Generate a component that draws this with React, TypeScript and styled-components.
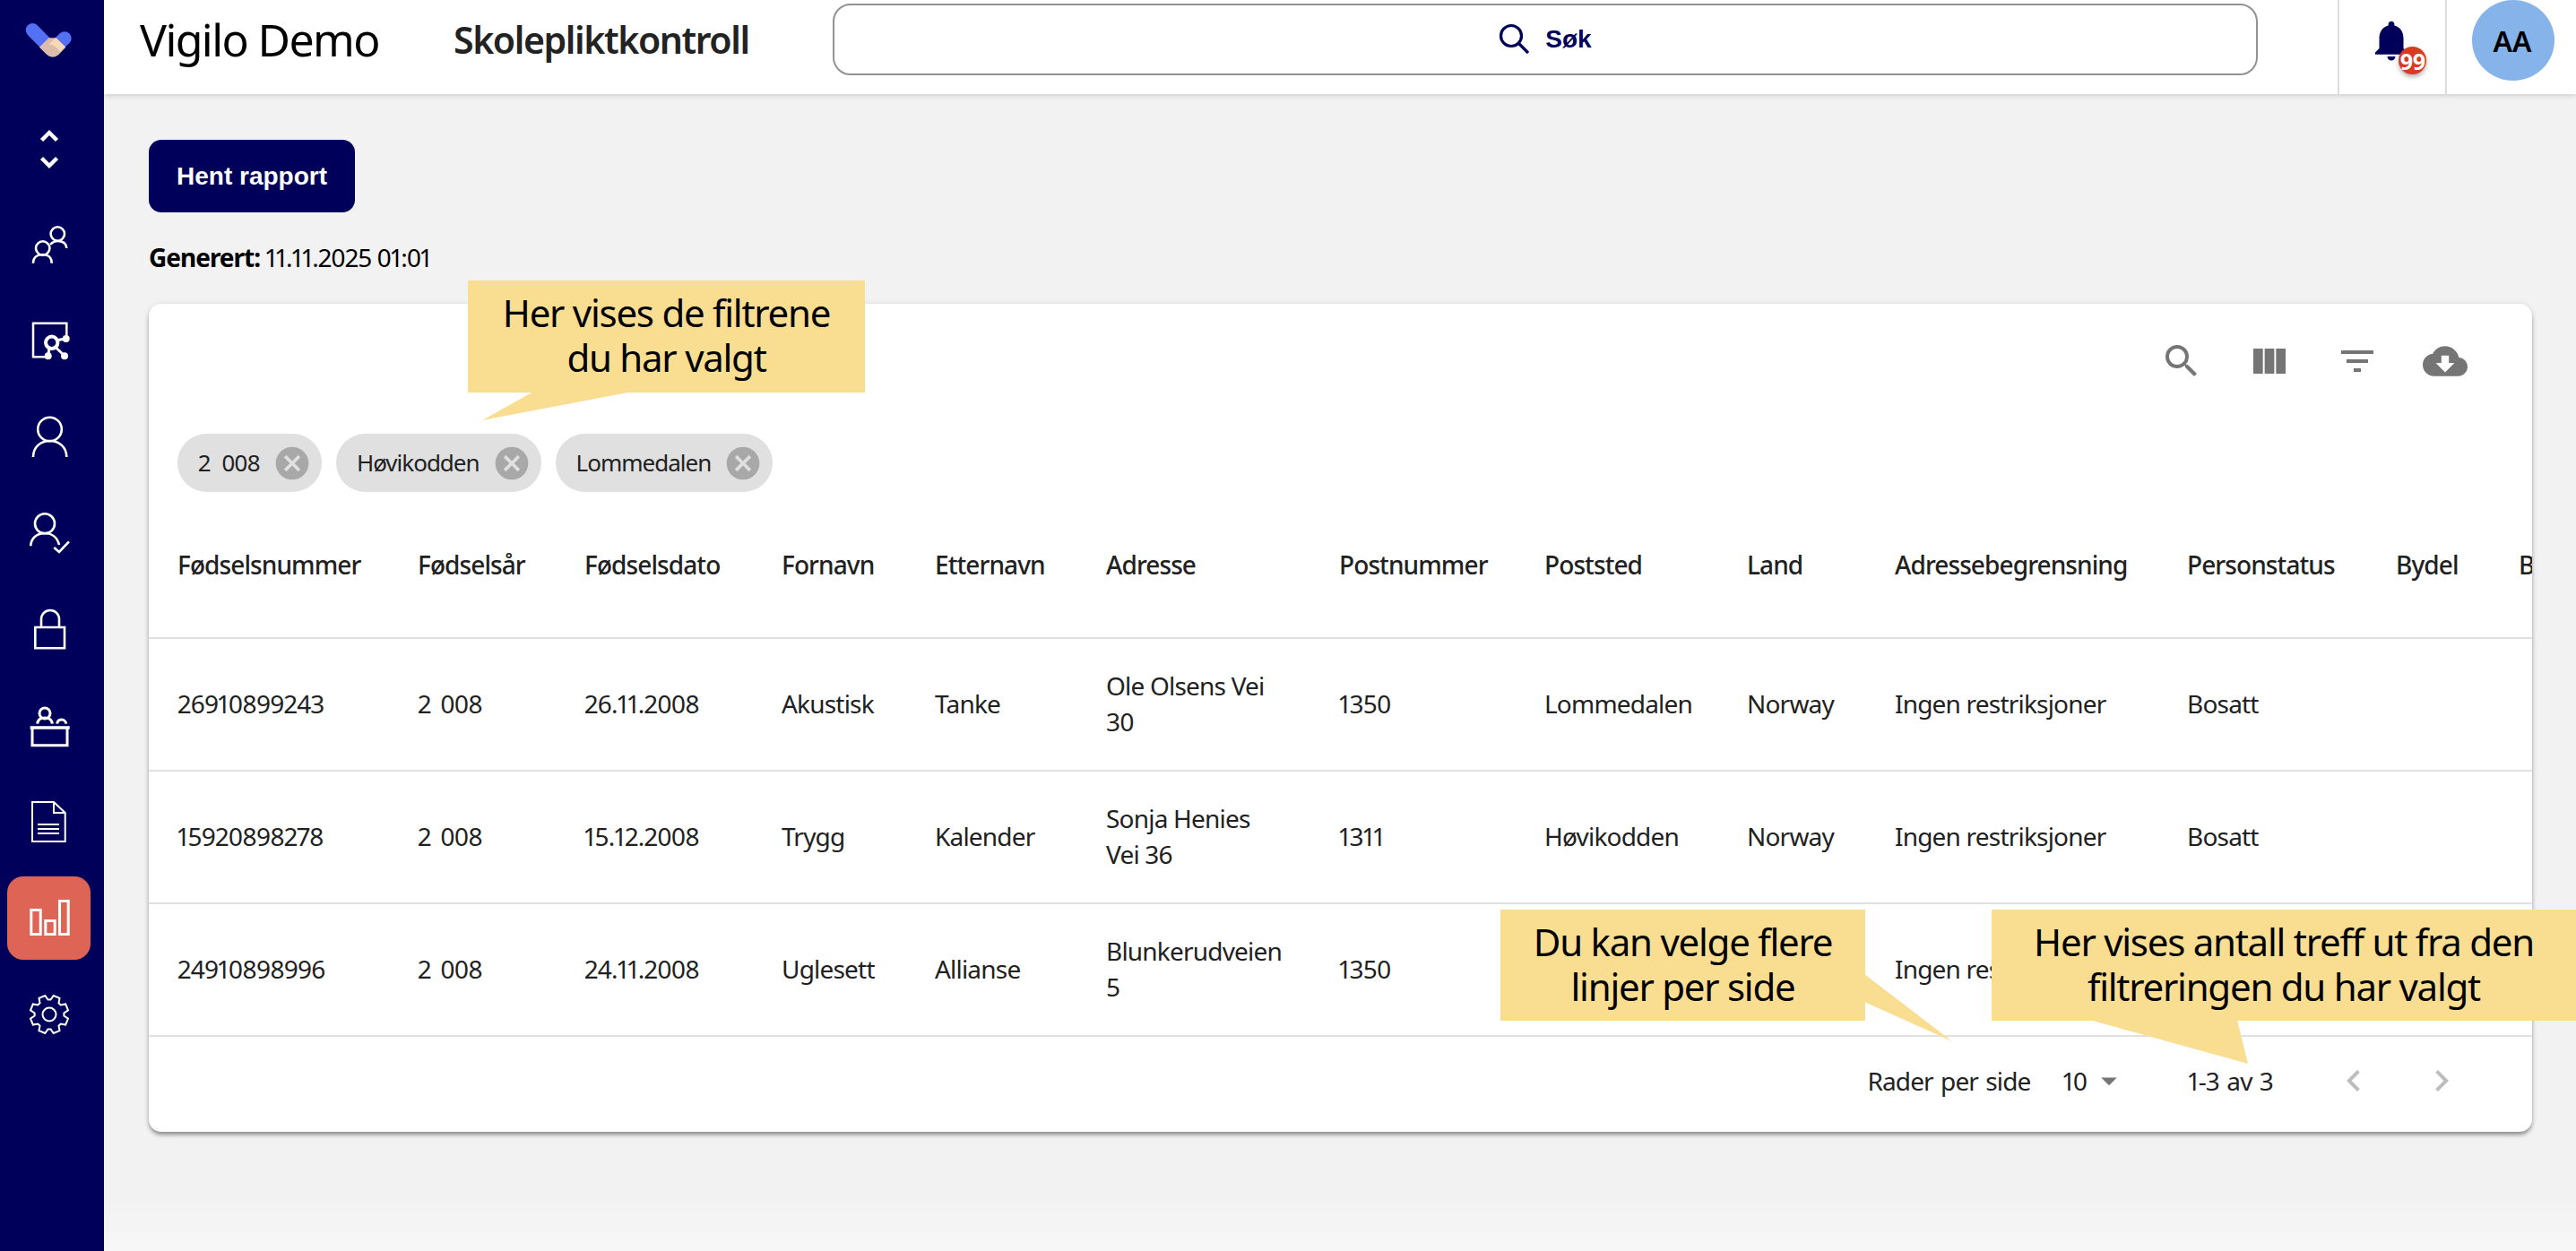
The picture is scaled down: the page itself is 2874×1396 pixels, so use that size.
import styled, { createGlobalStyle } from 'styled-components';
import {
  MdArrowDropDown,
  MdCancel,
  MdChevronLeft,
  MdChevronRight,
  MdCloudDownload,
  MdFilterList,
  MdNotifications,
  MdSearch,
  MdViewColumn,
} from 'react-icons/md';

const NAVY = '#00005a';
const COLUMNS = '268px 186px 220px 171px 191px 260px 229px 226px 165px 326px 233px 137px 400px';

const headers = [
  'Fødselsnummer', 'Fødselsår', 'Fødselsdato', 'Fornavn', 'Etternavn', 'Adresse', 'Postnummer',
  'Poststed', 'Land', 'Adressebegrensning', 'Personstatus', 'Bydel', 'Barnehage',
];

const rows = [
  ['26910899243', '2 008', '26.11.2008', 'Akustisk', 'Tanke', 'Ole Olsens Vei 30', '1350', 'Lommedalen', 'Norway', 'Ingen restriksjoner', 'Bosatt', '', ''],
  ['15920898278', '2 008', '15.12.2008', 'Trygg', 'Kalender', 'Sonja Henies Vei 36', '1311', 'Høvikodden', 'Norway', 'Ingen restriksjoner', 'Bosatt', '', ''],
  ['24910898996', '2 008', '24.11.2008', 'Uglesett', 'Allianse', 'Blunkerudveien 5', '1350', 'Lommedalen', 'Norway', 'Ingen restriksjoner', 'Bosatt', '', ''],
];

const chips = ['2 008', 'Høvikodden', 'Lommedalen'];

const gearPath = () => {
  const points: string[] = [];
  for (let i = 0; i < 8; i++) {
    const a = (i * Math.PI) / 4 - Math.PI / 8;
    const at = (r: number, d: number) => `${(30 + r * Math.cos(a + d)).toFixed(1)} ${(30 + r * Math.sin(a + d)).toFixed(1)}`;
    points.push(at(16.5, -0.3), at(21.5, -0.17), at(21.5, 0.17), at(16.5, 0.3));
  }
  return `M${points.join('L')}Z`;
};

const Logo = () => (
  <svg width="57" height="43" viewBox="50 10 170 130">
    <path d="M80 42L125 88" stroke="#5470f5" strokeWidth="46" strokeLinecap="round" />
    <path d="M188 70L165 92" stroke="#5470f5" strokeWidth="46" strokeLinecap="round" />
    <path d="M135 68L103 100L128 125Q148 142 168 125L192 100L160 68Z" fill="#dcbcaa" />
    <path d="M135 90L158 68L190 98L172 116Q160 92 135 90Z" fill="#f7d9b6" />
  </svg>
);

const navIcons = [
  <path key="c" d="M21.5 20.5L30 12L38.5 20.5M21.5 40.5L30 49L38.5 40.5" strokeWidth="4.4" />,
  <g key="g">
    <circle cx="39.3" cy="18" r="7.7" />
    <circle cx="22.7" cy="34" r="7.7" />
    <path d="M12 50.7C12 44 17 41 22.7 41C28 41 32.7 44 32.7 50.7" />
    <path d="M31 29.7C34 27 36 26 39 26C45 26 49 28 49.3 34" />
  </g>,
  <g key="n">
    <path d="M49.3 24.7V9.7H12V47.3H31" strokeWidth="2.5" />
    <circle cx="32.7" cy="31.3" r="6.7" strokeWidth="4" />
    <path d="M37 29L48 27M30 37L28.7 46M36.5 36L47 46" strokeWidth="3" />
    <circle cx="48.7" cy="27" r="4" fill="#fff" stroke="none" />
    <circle cx="28.7" cy="46.3" r="4" fill="#fff" stroke="none" />
    <circle cx="47" cy="46.3" r="4" fill="#fff" stroke="none" />
  </g>,
  <g key="p">
    <circle cx="30.5" cy="21" r="13.3" />
    <path d="M12 52C12 41 20 34 30.7 34C41 34 49.3 41 49.3 52" />
  </g>,
  <g key="pc">
    <circle cx="25" cy="19.3" r="11" />
    <path d="M9.3 44.3C9.3 36 16 30 25 30C33 30 39 35 41 43" />
    <path d="M35.3 46L41 51L52 39.3" />
  </g>,
  <g key="l">
    <path d="M14.3 28H47V51.3H14.3Z" />
    <path d="M21 28V19A10 10 0 0 1 41 19V28" />
  </g>,
  <g key="d">
    <path d="M8.7 32H52.7" strokeWidth="3.5" />
    <path d="M11 32V51.7H50V32" strokeWidth="3" />
    <circle cx="25" cy="16" r="6" strokeWidth="3" />
    <path d="M16.7 27.7C17 23 21 21 25 21C29 21 33 23 33.3 27.7" strokeWidth="3" />
    <path d="M38.7 27.7C39 25 41 23 43.7 23C46 23 48.5 25 48.7 27.7" strokeWidth="3" />
  </g>,
  <g key="f" strokeWidth="2">
    <path d="M11 8H35L47.7 20V52H11Z" />
    <path d="M35 8V20H47.7" />
    <path d="M17 33H41M17 38H41M17 43H41" />
  </g>,
  <g key="b" strokeWidth="3">
    <path d="M9.8 21.5H20.2V48.5H9.8Z" />
    <path d="M25.8 33.5H36.2V48.5H25.8Z" />
    <path d="M41.5 11.5H51.2V48.5H41.5Z" />
  </g>,
  <g key="s" strokeWidth="2">
    <path d={gearPath()} />
    <circle cx="30" cy="30" r="7.5" />
  </g>,
];

const App = () => (
  <Page>
    <GlobalStyle />
    <Sidebar>
      <LogoBox>
        <Logo />
      </LogoBox>
      <Nav>
        {navIcons.map((icon, index) => (
          <NavItem key={index} $active={index === 8}>
            <NavIcon viewBox="0 0 60 60">{icon}</NavIcon>
          </NavItem>
        ))}
      </Nav>
    </Sidebar>

    <Main>
      <Header>
        <Title>Vigilo Demo</Title>
        <PageName>Skolepliktkontroll</PageName>
        <SearchBox>
          <SearchIcon viewBox="0 0 36 36">
            <circle cx="14" cy="14" r="11.5" />
            <path d="M22.5 22.5L33 33" />
          </SearchIcon>
          <SearchText>Søk</SearchText>
        </SearchBox>
        <BellBox>
          <MdNotifications size={54} color={NAVY} />
          <Badge>99</Badge>
        </BellBox>
        <AvatarBox>
          <Avatar>AA</Avatar>
        </AvatarBox>
      </Header>

      <Content>
        <ReportButton>Hent rapport</ReportButton>
        <Generated>
          <b>Generert:</b> 11.11.2025 01:01
        </Generated>

        <Card>
          <Toolbar>
            <ToolButton><MdSearch size={48} /></ToolButton>
            <ToolButton><MdViewColumn size={48} /></ToolButton>
            <ToolButton><MdFilterList size={48} /></ToolButton>
            <ToolButton><MdCloudDownload size={50} /></ToolButton>
          </Toolbar>
          <Chips>
            {chips.map((chip) => (
              <Chip key={chip}>
                {chip}
                <MdCancel size={44} color="#a8a8a8" />
              </Chip>
            ))}
          </Chips>
          <HeaderRow>
            {headers.map((header) => (
              <HeaderCell key={header}>{header}</HeaderCell>
            ))}
          </HeaderRow>
          {rows.map((row) => (
            <Row key={row[0]}>
              {row.map((cell, index) => (
                <Cell key={index} $wrap={index === 5} $year={index === 1}>{cell}</Cell>
              ))}
            </Row>
          ))}
          <Footer>
            <PerPageLabel>Rader per side</PerPageLabel>
            <PerPage>
              10
              <MdArrowDropDown size={42} color="#757575" />
            </PerPage>
            <Range>1-3 av 3</Range>
            <PageButton><MdChevronLeft size={48} /></PageButton>
            <PageButton><MdChevronRight size={48} /></PageButton>
          </Footer>
        </Card>
      </Content>
    </Main>

    <Callout $left={522} $top={313} $width={443} $height={125}>
      <Tail><polygon points="73,124 184,124 16,156" /></Tail>
      <CalloutText>Her vises de filtrene<br />du har valgt</CalloutText>
    </Callout>
    <Callout $left={1674} $top={1015} $width={407} $height={124}>
      <Tail><polygon points="406,72 406,103 504,147" /></Tail>
      <CalloutText>Du kan velge flere<br />linjer per side</CalloutText>
    </Callout>
    <Callout $left={2222} $top={1015} $width={652} $height={124}>
      <Tail><polygon points="109,123 274,123 286,172" /></Tail>
      <CalloutText>Her vises antall treff ut fra den<br />filtreringen du har valgt</CalloutText>
    </Callout>
  </Page>
);

const GlobalStyle = createGlobalStyle`
html, body {
  margin: 0;
  padding: 0;
  overflow: hidden;
}

body {
  font-family: "Noto Sans", "Open Sans", sans-serif;
  font-variant-numeric: proportional-nums;
  color: #212121;
}
`;

const Page = styled.div`
position: relative;
display: flex;
width: 2874px;
height: 1396px;
overflow: hidden;
background: linear-gradient(#f2f2f2 96%, #f7f7f7);
`;

const Sidebar = styled.aside`
flex: 0 0 116px;
background: ${NAVY};
display: flex;
flex-direction: column;
z-index: 2;
`;

const LogoBox = styled.div`
height: 105px;
display: flex;
justify-content: center;
padding: 23px 7px 0 0;
box-sizing: border-box;
`;

const Nav = styled.nav`
display: flex;
flex-direction: column;
gap: 14.3px;
padding: 14.5px 0 0 8px;
`;

const NavItem = styled.div<{ $active?: boolean }>`
width: 93px;
height: 93px;
border-radius: 18px;
display: flex;
align-items: center;
justify-content: center;
background: ${({ $active }) => ($active ? '#de6555' : 'transparent')};
`;

const NavIcon = styled.svg`
width: 60px;
height: 60px;
fill: none;
stroke: #fff;
stroke-width: 2.6;
`;

const Main = styled.div`
flex: 1;
min-width: 0;
display: flex;
flex-direction: column;
`;

const Header = styled.header`
height: 105px;
flex: none;
background: #fff;
box-shadow: 0 2px 5px rgba(0, 0, 0, 0.14);
display: flex;
align-items: center;
padding-left: 40px;
`;

const Title = styled.div`
width: 350px;
flex: none;
margin-bottom: 17px;
font-size: 50px;
font-weight: 400;
letter-spacing: -1.6px;
color: #000;
`;

const PageName = styled.div`
width: 423px;
flex: none;
margin-bottom: 17px;
font-size: 41px;
font-weight: 600;
letter-spacing: -1.4px;
color: #222;
`;

const SearchBox = styled.div`
width: 1590px;
height: 80px;
flex: none;
margin: 0 89px 17px 0;
box-sizing: border-box;
border: 2px solid #929292;
border-radius: 20px;
display: flex;
align-items: center;
justify-content: center;
gap: 16px;
`;

const SearchIcon = styled.svg`
width: 36px;
height: 36px;
fill: none;
stroke: ${NAVY};
stroke-width: 3.2;
`;

const SearchText = styled.span`
font-family: "Liberation Sans", Arial, sans-serif;
font-size: 28px;
font-weight: 700;
color: ${NAVY};
`;

const BellBox = styled.div`
position: relative;
width: 122px;
height: 105px;
flex: none;
box-sizing: border-box;
border-left: 2px solid #dcdcdc;
border-right: 2px solid #dcdcdc;
display: flex;
justify-content: center;
padding: 18px 2px 0 0;
`;

const Badge = styled.span`
position: absolute;
left: 66px;
top: 52px;
width: 31px;
height: 31px;
border-radius: 50%;
background: #d93a22;
color: #fff;
font-size: 25px;
font-weight: 700;
letter-spacing: -1px;
display: flex;
align-items: center;
justify-content: center;
box-shadow: 0 3px 5px rgba(0, 0, 0, 0.3);
`;

const AvatarBox = styled.div`
flex: 1;
height: 105px;
padding: 0 0 0 28px;
box-sizing: border-box;
`;

const Avatar = styled.div`
width: 92px;
height: 90px;
padding-right: 2px;
box-sizing: border-box;
border-radius: 50%;
background: #86b4ea;
color: #000;
font-size: 32px;
font-weight: 600;
display: flex;
align-items: center;
justify-content: center;
`;

const Content = styled.main`
padding: 51px 49px 0 50px;
display: flex;
flex-direction: column;
align-items: flex-start;
`;

const ReportButton = styled.button`
width: 230px;
height: 81px;
border: none;
border-radius: 14px;
background: ${NAVY};
color: #fff;
font-family: "Liberation Sans", Arial, sans-serif;
font-size: 28px;
font-weight: 700;
padding: 0;
`;

const Generated = styled.div`
height: 40px;
margin: 30px 0 32px;
font-size: 28px;
line-height: 40px;
letter-spacing: -1px;
color: #000;

b {
  font-weight: 700;
}
`;

const Card = styled.section`
width: 2659px;
height: 924px;
background: #fff;
border-radius: 14px;
overflow: hidden;
box-shadow: 0 4px 5px -1px rgba(0, 0, 0, 0.4), 0 1px 6px rgba(0, 0, 0, 0.12);
`;

const Toolbar = styled.div`
height: 145px;
box-sizing: border-box;
padding: 16px 48px 0 0;
display: flex;
justify-content: flex-end;
align-items: flex-start;
`;

const ToolButton = styled.span`
width: 98px;
height: 96px;
display: flex;
align-items: center;
justify-content: center;
color: #757575;
`;

const Chips = styled.div`
height: 65px;
padding-left: 32px;
display: flex;
gap: 16px;
`;

const Chip = styled.div`
height: 65px;
box-sizing: border-box;
padding: 0 11px 2px 23px;
border-radius: 33px;
background: #e0e0e0;
display: flex;
align-items: center;
gap: 14px;
font-size: 26px;
letter-spacing: -1px;
word-spacing: 7px;

svg {
  margin-bottom: -2px;
}
`;

const HeaderRow = styled.div`
height: 164px;
box-sizing: border-box;
padding-left: 32px;
display: grid;
grid-template-columns: ${COLUMNS};
align-items: center;
width: max-content;
min-width: 100%;
border-bottom: 2px solid #e0e0e0;
`;

const HeaderCell = styled.div`
font-size: 28px;
font-weight: 500;
letter-spacing: -0.9px;
white-space: nowrap;
`;

const Row = styled(HeaderRow)`
height: 148px;
`;

const Cell = styled.div<{ $wrap?: boolean; $year?: boolean }>`
font-size: 28px;
line-height: 40px;
letter-spacing: -0.8px;
padding-bottom: 2px;
word-spacing: ${({ $year }) => ($year ? '4px' : '0')};
max-width: ${({ $wrap }) => ($wrap ? '200px' : 'none')};
`;

const Footer = styled.footer`
height: 107px;
box-sizing: border-box;
padding: 0 52px 9px 0;
display: flex;
align-items: center;
justify-content: flex-end;
font-size: 28px;
letter-spacing: -0.9px;
word-spacing: 2px;
`;

const PerPageLabel = styled.span`
margin-right: 36px;
`;

const PerPage = styled.span`
display: flex;
align-items: center;
gap: 4px;
margin-right: 67px;
`;

const Range = styled.span`
margin-right: 41px;
`;

const PageButton = styled.span`
width: 98px;
display: flex;
justify-content: center;
color: #bdbdbd;
`;

const Callout = styled.div<{ $left: number; $top: number; $width: number; $height: number }>`
position: absolute;
left: ${({ $left }) => $left}px;
top: ${({ $top }) => $top}px;
width: ${({ $width }) => $width}px;
height: ${({ $height }) => $height}px;
box-sizing: border-box;
padding-bottom: 3px;
background: #f9de92;
color: #000;
font-size: 42px;
line-height: 50px;
letter-spacing: -1.25px;
text-align: center;
display: flex;
align-items: center;
justify-content: center;
z-index: 5;
`;

const CalloutText = styled.span`
position: relative;
`;

const Tail = styled.svg`
position: absolute;
left: 0;
top: 0;
width: 100%;
height: 100%;
overflow: visible;
fill: #f9de92;
`;

export default App;
